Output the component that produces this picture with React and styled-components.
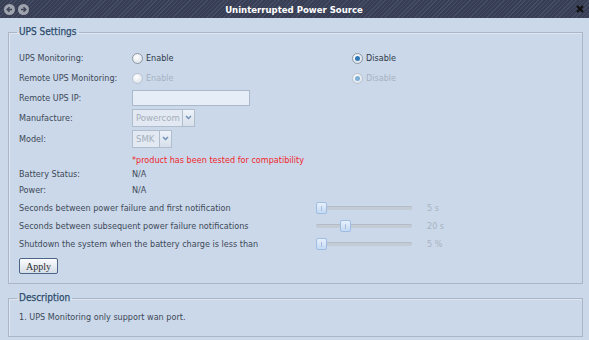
import React from "react";
import styled, { createGlobalStyle } from "styled-components";

const GlobalStyle = createGlobalStyle`
  body {
    margin: 0;
    background: #cad8ea;
    font-family: "DejaVu Sans Condensed", "DejaVu Sans", sans-serif;
  }
`;

const Window = styled.div`
  width: 589px;
  height: 340px;
  background: #cad8ea;
  overflow: hidden;
  color: #3e4957;
  font-size: 9px;
`;

const TitleBar = styled.div`
  height: 18px;
  display: flex;
  align-items: center;
  padding: 0 4px;
  background: repeating-linear-gradient(
    -45deg,
    #454d66 0 1px,
    #373e54 1px 3px
  );
`;

const NavButtons = styled.div`
  display: flex;
  gap: 3px;
  width: 70px;
`;

const NavButton = styled.span`
  width: 11px;
  height: 11px;
  border-radius: 50%;
  background: #9ea3ad;
  display: flex;
  align-items: center;
  justify-content: center;
`;

const Title = styled.div`
  flex: 1;
  text-align: center;
  color: #fff;
  font-family: "DejaVu Sans Condensed", "DejaVu Sans", sans-serif;
  font-weight: bold;
  font-size: 9.5px;
`;

const Close = styled.div`
  width: 70px;
  display: flex;
  justify-content: flex-end;
  padding-right: 1px;
`;

const Content = styled.div`
  padding: 8px 6px 0 8px;
  display: flex;
  flex-direction: column;
  gap: 8px;
`;

const Fieldset = styled.fieldset`
  margin: 0;
  border: 1px solid #aab6c6;
  box-shadow: inset 1px 1px 0 #dde6f1;
  padding: ${(p) => p.$pad};
`;

const Legend = styled.legend`
  padding: 0 2px;
  margin-left: 0;
  color: #2c4b6b;
  font-family: "DejaVu Sans Condensed", "DejaVu Sans", sans-serif;
  font-size: 10px;
  line-height: 12px;
  -webkit-text-stroke: 0.25px #2c4b6b;
`;

const Row = styled.div`
  display: flex;
  align-items: center;
  height: ${(p) => p.$h}px;
  margin-top: ${(p) => p.$mt || 0}px;
  padding-left: 2px;
`;

const Label = styled.div`
  width: ${(p) => p.$w || 113}px;
  flex-shrink: 0;
  color: #3e4957;
`;

const Choice = styled.label`
  width: 220px;
  display: flex;
  align-items: center;
  gap: 3px;
  color: ${(p) => (p.$disabled ? "#a7b2bf" : "#2e3947")};
`;

const Radio = styled.span`
  width: 9px;
  height: 9px;
  border-radius: 50%;
  border: 1px solid ${(p) => (p.$disabled ? "#b9c3cf" : "#8e98a4")};
  background: radial-gradient(circle at 40% 35%, #ffffff, #d5dce5);
  display: flex;
  align-items: center;
  justify-content: center;
  &::after {
    content: "";
    width: 5px;
    height: 5px;
    border-radius: 50%;
    background: ${(p) =>
      p.$checked ? (p.$disabled ? "#7fb0d8" : "#2f78b8") : "transparent"};
  }
`;

const TextInput = styled.div`
  width: 116px;
  height: 14px;
  border: 1px solid #a9b8ca;
  background: #e6edf6;
`;

const Select = styled.div`
  display: flex;
  height: 16px;
  border: 1px solid #b0bdcd;
  background: #e2e9f2;
`;

const SelectValue = styled.div`
  width: ${(p) => p.$w}px;
  padding-left: 3px;
  display: flex;
  align-items: center;
  color: #a4aebb;
  font-size: 9.5px;
`;

const SelectArrow = styled.div`
  width: 11px;
  border-left: 1px solid #b0bdcd;
  background: linear-gradient(#eef3f9, #d6dfea);
  display: flex;
  align-items: center;
  justify-content: center;
`;

const Notice = styled.div`
  color: #f0262a;
  padding-left: 113px;
`;

const Slider = styled.div`
  width: 96px;
  height: 4px;
  border-radius: 2px;
  background: #c3cbd5;
  box-shadow: inset 0 1px 0 #b4bcc7;
  display: flex;
  align-items: center;
  padding-left: ${(p) => p.$pos}px;
  box-sizing: border-box;
`;

const Thumb = styled.span`
  width: 9px;
  height: 10px;
  border: 1px solid #9fbde3;
  border-radius: 2px;
  background: linear-gradient(#e6f0fc, #c4d9f3);
  display: flex;
  justify-content: center;
  align-items: center;
  &::after {
    content: "";
    width: 1px;
    height: 5px;
    background: #a9bfd9;
  }
`;

const SliderValue = styled.div`
  margin-left: 15px;
  color: #a9b3c0;
`;

const ApplyButton = styled.button`
  display: block;
  width: 39px;
  height: 16px;
  border: 1px solid #4b6687;
  border-radius: 2px;
  background: linear-gradient(#fbfcfd, #d5dde7);
  font-family: "Liberation Serif", serif;
  font-size: 10px;
  color: #2c2c2c;
  padding: 0;
  margin-left: 2px;
  margin-top: 5px;
`;

const Arrow = () => (
  <svg width="7" height="5" viewBox="0 0 7 5">
    <path d="M1 1 L3.5 3.5 L6 1" stroke="#6f8fb5" strokeWidth="1.4" fill="none" />
  </svg>
);

const sliders = [
  { label: "Seconds between power failure and first notification", pos: 0, value: "5 s" },
  { label: "Seconds between subsequent power failure notifications", pos: 24, value: "20 s" },
  { label: "Shutdown the system when the battery charge is less than", pos: 0, value: "5 %" },
];

export default function App() {
  return (
    <Window>
      <GlobalStyle />
      <TitleBar>
        <NavButtons>
          <NavButton>
            <svg width="7" height="7" viewBox="0 0 7 7">
              <path d="M6 3.5 H1.5 M3.5 1.2 L1.2 3.5 L3.5 5.8" stroke="#3d4356" strokeWidth="1.5" fill="none" />
            </svg>
          </NavButton>
          <NavButton>
            <svg width="7" height="7" viewBox="0 0 7 7">
              <path d="M1 3.5 H5.5 M3.5 1.2 L5.8 3.5 L3.5 5.8" stroke="#3d4356" strokeWidth="1.5" fill="none" />
            </svg>
          </NavButton>
        </NavButtons>
        <Title>Uninterrupted Power Source</Title>
        <Close>
          <svg width="8" height="8" viewBox="0 0 8 8">
            <path d="M1 1 L7 7 M7 1 L1 7" stroke="#111" strokeWidth="2.2" />
          </svg>
        </Close>
      </TitleBar>
      <Content>
        <Fieldset $pad="10px 8px 9px">
          <Legend>UPS Settings</Legend>
          <Row $h={20}>
            <Label>UPS Monitoring:</Label>
            <Choice>
              <Radio />
              Enable
            </Choice>
            <Choice>
              <Radio $checked />
              Disable
            </Choice>
          </Row>
          <Row $h={20}>
            <Label>Remote UPS Monitoring:</Label>
            <Choice $disabled>
              <Radio $disabled />
              Enable
            </Choice>
            <Choice $disabled>
              <Radio $disabled $checked />
              Disable
            </Choice>
          </Row>
          <Row $h={19}>
            <Label>Remote UPS IP:</Label>
            <TextInput />
          </Row>
          <Row $h={21}>
            <Label>Manufacture:</Label>
            <Select>
              <SelectValue $w={46}>Powercom</SelectValue>
              <SelectArrow>
                <Arrow />
              </SelectArrow>
            </Select>
          </Row>
          <Row $h={21}>
            <Label>Model:</Label>
            <Select>
              <SelectValue $w={23}>SMK</SelectValue>
              <SelectArrow>
                <Arrow />
              </SelectArrow>
            </Select>
          </Row>
          <Row $h={14} $mt={4}>
            <Notice>*product has been tested for compatibility</Notice>
          </Row>
          <Row $h={14}>
            <Label>Battery Status:</Label>
            N/A
          </Row>
          <Row $h={18}>
            <Label>Power:</Label>
            N/A
          </Row>
          {sliders.map((s) => (
            <Row $h={18} key={s.label}>
              <Label $w={297}>{s.label}</Label>
              <Slider $pos={s.pos}>
                <Thumb />
              </Slider>
              <SliderValue>{s.value}</SliderValue>
            </Row>
          ))}
          <ApplyButton>Apply</ApplyButton>
        </Fieldset>
        <Fieldset $pad="6px 8px 12px">
          <Legend>Description</Legend>
          <Row $h={14}>1. UPS Monitoring only support wan port.</Row>
        </Fieldset>
      </Content>
    </Window>
  );
}
